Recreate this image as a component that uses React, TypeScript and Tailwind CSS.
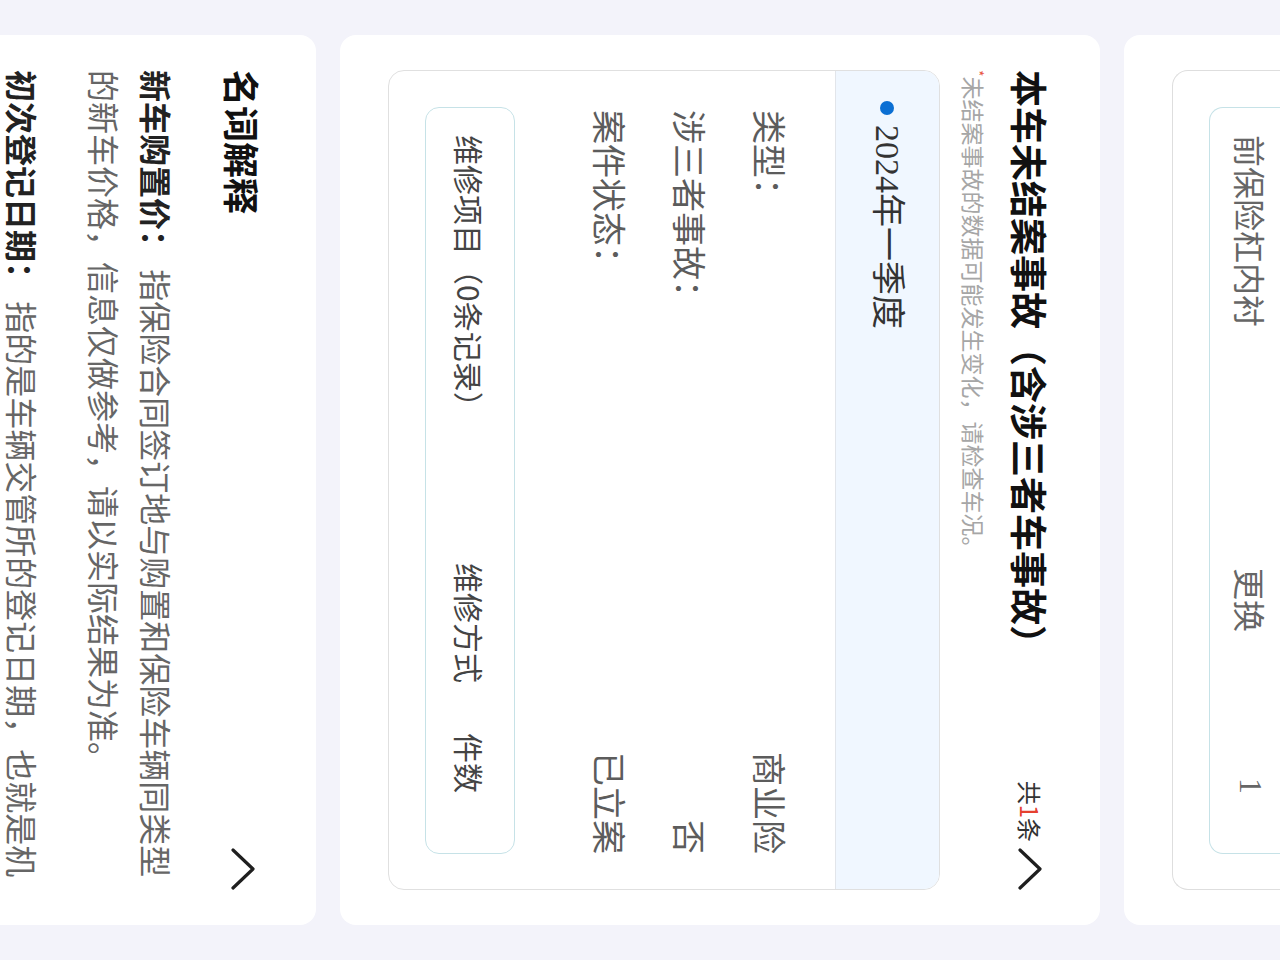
import React from "react";

const ChevronUp = () => {
  return (
    <svg width="42" height="26" viewBox="0 0 42 26" fill="none" stroke="#1f1f1f" strokeWidth="3.2" strokeLinecap="round" strokeLinejoin="round">
      <polyline points="2,23 21,3 40,23" />
    </svg>
  );
};

// tail of the previous accordion, only its bottom is on screen
const RepairTail = () => {
  return (
    <div className="h-[156px] shrink-0 flex flex-col justify-end overflow-hidden rounded-b-[16px] bg-white px-[35px] pb-[48px]">
      <div className="border-x border-b border-[#dedede] rounded-b-[16px] pl-[36px] pr-[35px] pb-[36px]">
        <div className="border-x border-b border-[#c6e2e7] rounded-b-[14px] pb-[11px]">
          <div className="h-[60px] flex items-center pl-[27px] text-[32px] text-[#666]">
            <span className="w-[433px]">前保险杠内衬</span>
            <span className="w-[170px]">更换</span>
            <span className="pl-[40px] font-['Liberation_Serif',serif]">1</span>
          </div>
        </div>
      </div>
    </div>
  );
};

const InfoRow = ({ label, value }: { label: string; value: string }) => {
  return (
    <div className="h-[80px] flex items-center justify-between pl-[39px] pr-[35px] text-[34px] text-[#5c5c5c]">
      <span>{label}</span>
      <span>{value}</span>
    </div>
  );
};

const PendingAccidents = () => {
  return (
    <div className="shrink-0 rounded-[16px] bg-white px-[35px] pt-[45px] pb-[48px]">
      <div className="flex items-center justify-between">
        <span className="text-[37px] leading-[50px] font-bold text-[#111]">本车未结案事故（含涉三者车事故）</span>
        <div className="flex items-center gap-x-[6px] text-[24px] text-[#333]">
          <span>
            共<span className="text-[#e5402f]">1</span>条
          </span>
          <ChevronUp />
        </div>
      </div>
      <div className="mt-[16px] text-[23px] leading-[30px] text-[#a6a6a6]">
        <span className="align-top text-[14px] leading-[20px] text-[#e8533f]">*</span>
        未结案事故的数据可能发生变化，请检查车况。
      </div>
      <div className="mt-[19px] border border-[#e0e0e0] rounded-[16px] overflow-hidden">
        <div className="h-[104px] flex items-center bg-[#f0f7ff] border-b border-[#e2e5ea] pl-[30px]">
          <div className="w-[14px] h-[14px] rounded-full bg-[#0b6fd3]" />
          <span className="ml-[10px] text-[34px] text-[#333] font-['Liberation_Serif','Noto_Sans_CJK_SC',serif]">
            2024年一季度
          </span>
        </div>
        <div className="pt-[24px]">
          <InfoRow label="类型：" value="商业险" />
          <InfoRow label="涉三者事故：" value="否" />
          <InfoRow label="案件状态：" value="已立案" />
        </div>
        <div className="mt-[56px] ml-[36px] mr-[35px] mb-[36px] h-[90px] flex items-center border border-[#c6e2e7] rounded-[14px] pl-[27px] text-[30px] text-[#444]">
          <span className="w-[428px]">维修项目（0条记录）</span>
          <span className="w-[170px]">维修方式</span>
          <span>件数</span>
        </div>
      </div>
    </div>
  );
};

const Glossary = () => {
  return (
    <div className="flex-1 rounded-t-[16px] bg-white px-[35px] pt-[48px]">
      <div className="flex items-center justify-between">
        <span className="text-[36px] leading-[50px] font-bold text-[#111]">名词解释</span>
        <ChevronUp />
      </div>
      <p className="mt-[35px] text-[32px] leading-[52px] text-[#666]">
        <span className="font-bold text-[#222]">新车购置价：</span> 指保险合同签订地与购置和保险车辆同类型的新车价格，信息仅做参考，请以实际结果为准。
      </p>
      <p className="mt-[30px] text-[32px] leading-[52px] text-[#666]">
        <span className="font-bold text-[#222]">初次登记日期：</span> 指的是车辆交管所的登记日期，也就是机动车行驶证上的注册日期。
      </p>
    </div>
  );
};

export default function App() {
  return (
    <div className="w-[1280px] h-[960px] overflow-hidden bg-[#f3f3fa]">
      {/* the phone page is 960 wide, photographed turned a quarter clockwise */}
      <div className="w-[960px] h-[1280px] origin-top-left rotate-90 translate-x-[1280px] flex flex-col gap-y-[24px] px-[35px] overflow-hidden bg-[#f3f3fa] font-['Noto_Sans_CJK_SC','Noto_Sans',sans-serif]">
        <RepairTail />
        <PendingAccidents />
        <Glossary />
      </div>
    </div>
  );
}
